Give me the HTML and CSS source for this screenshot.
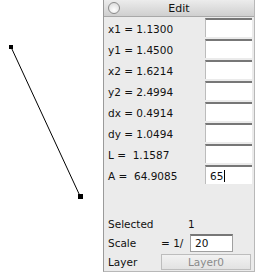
FILE: index.html
```html
<!DOCTYPE html>
<html lang="en">
<head>
    <meta charset="UTF-8">
    <title>Edit</title>
    <link rel="stylesheet" href="styles.css">
</head>
<body>
    <div class="screen">
        <div class="canvas">
            <svg width="103" height="272" viewBox="0 0 103 272">
                <line x1="11" y1="47" x2="80" y2="196" stroke="#000" stroke-width="1"/>
                <rect x="9" y="45" width="4" height="4" fill="#000"/>
                <rect x="78" y="194" width="5" height="5" fill="#000"/>
            </svg>
        </div>

        <div class="panel">
            <div class="titlebar">
                <span class="close"></span>
                <span class="title">Edit</span>
            </div>

            <div class="rows">
                <div class="row"><span class="label">x1 = 1.1300</span><span class="field"></span></div>
                <div class="row"><span class="label">y1 = 1.4500</span><span class="field"></span></div>
                <div class="row"><span class="label">x2 = 1.6214</span><span class="field"></span></div>
                <div class="row"><span class="label">y2 = 2.4994</span><span class="field"></span></div>
                <div class="row"><span class="label">dx = 0.4914</span><span class="field"></span></div>
                <div class="row"><span class="label">dy = 1.0494</span><span class="field"></span></div>
                <div class="row"><span class="label">L =&nbsp;&nbsp;1.1587</span><span class="field"></span></div>
                <div class="row"><span class="label">A =&nbsp;&nbsp;64.9085</span><span class="field">65<span class="caret"></span></span></div>
            </div>

            <div class="footer">
                <div class="info-row">
                    <span class="name">Selected</span>
                    <span class="value">1</span>
                </div>
                <div class="info-row">
                    <span class="name">Scale</span>
                    <span class="eq">= 1/</span>
                    <span class="scale-box">20</span>
                </div>
                <div class="info-row">
                    <span class="name">Layer</span>
                    <span class="layer-btn">Layer0</span>
                </div>
            </div>
        </div>
    </div>
</body>
</html>
```

FILE: styles.css
```css
body {
    margin: 0;
    background: #fff;
    font-family: "DejaVu Sans", sans-serif;
    font-size: 10.5px;
    color: #111;
}

.screen {
    display: flex;
    width: 256px;
    height: 272px;
}

.canvas {
    width: 103px;
    flex-shrink: 0;
}

.canvas svg {
    display: block;
}

.panel {
    width: 150px;
    height: 271px;
    display: flex;
    flex-direction: column;
    background: #ebebeb;
    border-left: 1px solid #9a9a9a;
    border-right: 1px solid #b8b8b8;
    border-bottom: 1px solid #b8b8b8;
}

.titlebar {
    height: 16px;
    display: flex;
    align-items: center;
    position: relative;
    background: linear-gradient(#ececec, #cfcfcf);
    border-bottom: 1px solid #a8a8a8;
}

.close {
    position: absolute;
    left: 4px;
    top: 2px;
    width: 10px;
    height: 10px;
    border-radius: 50%;
    border: 1px solid #8a8a8a;
    background: radial-gradient(circle at 50% 70%, #fff, #d6d6d6);
}

.title {
    flex: 1;
    text-align: center;
    font-size: 11px;
}

.rows {
    display: flex;
    flex-direction: column;
    padding-top: 1px;
}

.row {
    display: flex;
    height: 21px;
}

.label {
    width: 96px;
    padding-left: 4px;
    display: flex;
    align-items: center;
    white-space: pre;
}

.field {
    width: 47px;
    height: 19px;
    margin-left: 1px;
    background: #fff;
    border-top: 2px solid #777;
    border-left: 1px solid #bcbcbc;
    display: flex;
    align-items: center;
    padding-left: 4px;
    box-sizing: border-box;
}

.caret {
    display: inline-block;
    width: 1px;
    height: 12px;
    margin-left: 1px;
    background: #000;
}

.footer {
    margin-top: auto;
    padding-left: 4px;
    display: flex;
    flex-direction: column;
}

.info-row {
    display: flex;
    align-items: center;
    height: 19px;
}

.name {
    width: 53px;
}

.value {
    padding-left: 27px;
}

.eq {
    width: 29px;
}

.scale-box {
    width: 43px;
    height: 18px;
    box-sizing: border-box;
    background: #fff;
    border: 1px solid #a0a0a0;
    border-top: 2px solid #777;
    padding-left: 4px;
    display: flex;
    align-items: center;
}

.layer-btn {
    width: 90px;
    height: 16px;
    box-sizing: border-box;
    border: 1px solid #bdbdbd;
    background: linear-gradient(#f2f2f2, #e2e2e2);
    color: #8a8a8a;
    text-align: center;
    line-height: 14px;
}
```
